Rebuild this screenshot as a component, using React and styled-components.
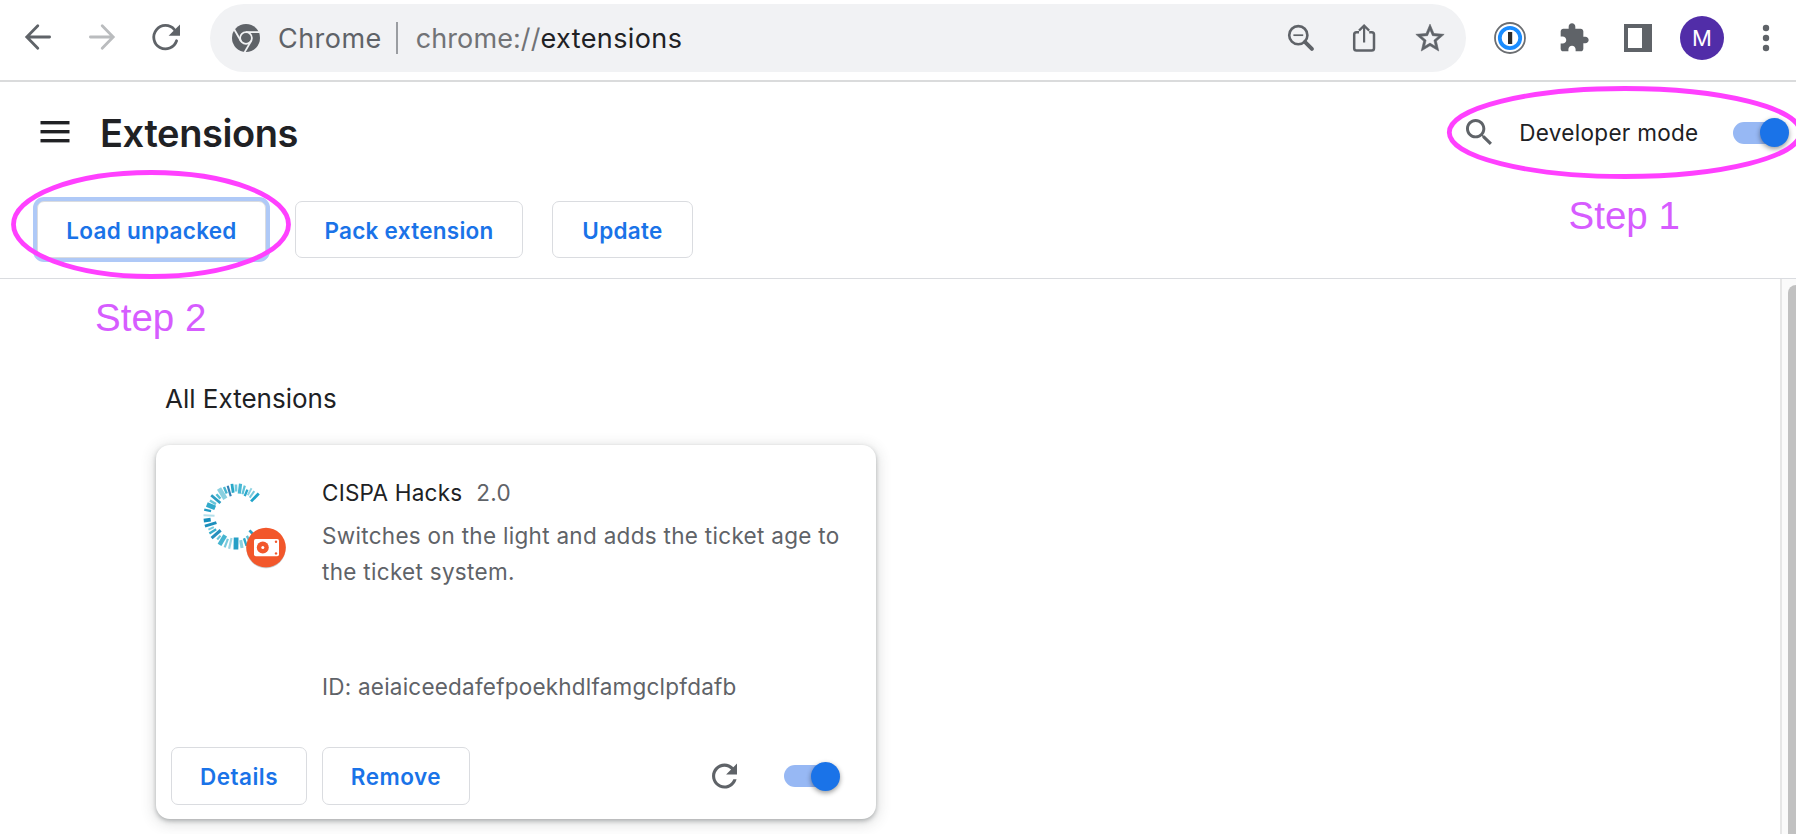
import React from "react";
import styled, { createGlobalStyle } from "styled-components";

const GlobalStyle = createGlobalStyle`
  *, *::before, *::after { box-sizing: border-box; }
  body {
    margin: 0;
    background: #fff;
    color: #202124;
    font-family: Inter, "Liberation Sans", sans-serif;
    font-size: 22.5px;
    letter-spacing: 0.3px;
  }
`;

const Window = styled.div`
  position: relative;
  display: flex;
  flex-direction: column;
  width: 1796px;
  height: 834px;
  overflow: hidden;
`;

const Icon = styled.svg`
  display: block;
  flex: none;
  overflow: visible;
`;

/* Browser toolbar */
const BrowserBar = styled.div`
  display: flex;
  align-items: center;
  flex: none;
  height: 82px;
  padding: 0 26px 6px 22px;
  border-bottom: 2px solid #dadbdc;
`;

const NavButtons = styled.div`
  display: flex;
  flex: none;
  gap: 32px;
  width: 188px;
`;

const Omnibox = styled.div`
  display: flex;
  align-items: center;
  flex: none;
  width: 1256px;
  height: 68px;
  margin-top: 2px;
  padding: 0 19px 0 22px;
  border-radius: 34px;
  background: #f1f2f4;
  font-size: 27px;
  letter-spacing: 0.45px;
  color: #5f6368;
`;

const SiteName = styled.span`
  margin-left: 18px;
`;

const Divider = styled.span`
  width: 2px;
  height: 32px;
  margin: 0 18px 0 14px;
  background: #9a9da1;
`;

const Url = styled.span`
  color: #717376;
  letter-spacing: 0.1px;
`;

const UrlHost = styled.span`
  color: #202124;
  letter-spacing: 0.4px;
`;

const OmniboxActions = styled.div`
  display: flex;
  align-items: center;
  gap: 32px;
  margin-left: auto;
`;

const BrowserActions = styled.div`
  display: flex;
  align-items: center;
  flex: none;
  gap: 32px;
  margin-left: 28px;
  padding-top: 2px;
`;

const Avatar = styled.span`
  display: grid;
  place-items: center;
  width: 44px;
  height: 44px;
  margin: 0 6px 0 -6px;
  border-radius: 50%;
  background: #512da8;
  color: #fff;
  font-size: 22px;
  letter-spacing: 0;
`;

/* Page header */
const Header = styled.header`
  display: flex;
  align-items: center;
  flex: none;
  height: 101px;
  padding: 0 7.5px 0 40px;
`;

const Title = styled.h1`
  margin: 0 auto 0 30px;
  font-size: 38px;
  font-weight: 560;
  letter-spacing: -0.4px;
`;

const ModeLabel = styled.span`
  margin: 0 34px 0 27px;
`;

const Track = styled.span`
  display: grid;
  align-items: center;
  flex: none;
  width: 56px;
  height: 29px;

  &::before {
    content: "";
    grid-area: 1 / 1;
    width: 50px;
    height: 22px;
    border-radius: 11px;
    background: #97b8f4;
  }
`;

const Knob = styled.span`
  grid-area: 1 / 1;
  justify-self: end;
  width: 29px;
  height: 29px;
  border-radius: 50%;
  background: #1a73e8;
  box-shadow: 0 2px 5px rgba(0, 0, 0, 0.4);
`;

const DevTools = styled.div`
  display: flex;
  gap: 29px;
  flex: none;
  height: 96px;
  padding: 18px 0 0 37px;
  border-bottom: 1px solid #dadce0;
`;

const Button = styled.button`
  flex: none;
  width: ${(p) => p.$width}px;
  height: ${(p) => (p.$tall ? 58 : 57)}px;
  padding: ${(p) => (p.$tall ? 0 : "2px")} 0 0;
  border: 1px solid #dadce0;
  border-radius: 7px;
  background: #fff;
  color: #1a73e8;
  font: 560 22.5px Inter, "Liberation Sans", sans-serif;
  letter-spacing: ${(p) => (p.$tall ? 0.5 : 0.28)}px;
  box-shadow: ${(p) => (p.$focused ? "0 0 0 4px #afc9f7" : "none")};
`;

/* Extension list */
const Content = styled.main`
  display: flex;
  flex: 1;
  min-height: 0;
`;

const List = styled.section`
  flex: 1;
  padding: 100px 0 0 156px;
`;

const ListTitle = styled.h2`
  margin: 0 0 26px 9px;
  font-size: 26px;
  line-height: 40px;
  font-weight: 400;
  letter-spacing: 0;
`;

const Scrollbar = styled.div`
  width: 16px;
  padding: 6px 0 0 6px;
  border-left: 2px solid #e6e6e6;
  background: #fafafa;
  overflow: hidden;
`;

const Thumb = styled.div`
  width: 16px;
  height: 600px;
  border-radius: 8px;
  background: #c1c1c1;
`;

const Card = styled.article`
  display: flex;
  flex-direction: column;
  width: 720px;
  height: 374px;
  border-radius: 14px;
  background: #fff;
  box-shadow: 0 2px 4px rgba(60, 64, 67, 0.34), 0 3px 13px 3px rgba(60, 64, 67, 0.15);
`;

const CardBody = styled.div`
  display: flex;
  flex: 1;
  padding: 29px 30px 0 47px;
`;

const Details = styled.div`
  display: flex;
  flex-direction: column;
  margin-left: 34px;
  padding-top: 1px;
  line-height: 36px;
  color: #5f6368;
  white-space: nowrap;
`;

const Name = styled.div`
  display: flex;
  gap: 14px;
  margin-bottom: 7px;
  letter-spacing: 0.22px;
`;

const NameText = styled.span`
  color: #202124;
`;

const Description = styled.p`
  width: 520px;
  margin: 0;
  white-space: normal;
`;

const ExtensionId = styled.div`
  margin-top: 79px;
  letter-spacing: 0.22px;
`;

const CardActions = styled.div`
  display: flex;
  align-items: center;
  gap: 15px;
  padding: 0 36px 14px 15px;
`;

const Reload = styled.span`
  margin-left: auto;
  margin-right: 32px;
`;

/* Hand-drawn annotations over the page */
const Annotations = styled.svg`
  position: absolute;
  inset: 0;
  pointer-events: none;
`;

const StepLabel = styled.span`
  position: absolute;
  left: ${(p) => p.$x}px;
  top: ${(p) => p.$y}px;
  color: #d65cff;
  font: 38.5px/44px "Liberation Sans", Arial, sans-serif;
  letter-spacing: 0;
`;

const GREY = "#5f6368";

function Toggle() {
  return (
    <Track role="switch" aria-checked="true">
      <Knob />
    </Track>
  );
}

function ArrowIcon({ color, forward }) {
  return (
    <Icon width="32" height="32" viewBox="0 0 32 32" fill="none" stroke={color} strokeWidth="2.8" strokeLinecap="round">
      <path
        transform={forward ? "translate(32 0) scale(-1 1)" : undefined}
        d="M27.6 16H5.4M15.8 4.8L4.8 16l11 11.2"
      />
    </Icon>
  );
}

function ToolbarReloadIcon() {
  return (
    <Icon width="32" height="32" viewBox="0 0 32 32">
      <path d="M26.6 19.8A11.7 11.7 0 1 1 24.4 8.6" fill="none" stroke={GREY} strokeWidth="2.8" strokeLinecap="round" />
      <path d="M30 3.5V14.7H18.6Z" fill={GREY} />
    </Icon>
  );
}

function ChromeIcon() {
  return (
    <Icon width="28" height="28" viewBox="0 0 28 28">
      <circle cx="14" cy="14" r="14" fill={GREY} />
      <g stroke="#f1f2f4" strokeWidth="1.8" fill="none">
        <circle cx="14" cy="14" r="5.9" />
        <path d="M14 8.1H27.5" />
        <path d="M14 8.1H27.5" transform="rotate(120 14 14)" />
        <path d="M14 8.1H27.5" transform="rotate(240 14 14)" />
      </g>
    </Icon>
  );
}

function ZoomOutIcon() {
  return (
    <Icon width="28" height="32" viewBox="0 0 28 32" fill="none" stroke={GREY}>
      <circle cx="11.3" cy="13.2" r="9.1" strokeWidth="2.6" />
      <path d="M6.4 13.2h9.8" strokeWidth="1.7" />
      <path d="M17.9 19.8l7 7" strokeWidth="4" strokeLinecap="round" />
    </Icon>
  );
}

function ShareIcon() {
  return (
    <Icon width="34" height="32" viewBox="-1 0 34 32" fill="none" stroke={GREY} strokeWidth="2.5">
      <path d="M11 10.2H8.5a2.3 2.3 0 0 0-2.3 2.3v13.8a2.3 2.3 0 0 0 2.3 2.3h15.2a2.3 2.3 0 0 0 2.3-2.3V12.5a2.3 2.3 0 0 0-2.3-2.3H21.2" />
      <path d="M16.1 20.5V4M11 8.6l5.100-5 5.100 5" strokeWidth="2.2" />
    </Icon>
  );
}

function StarIcon() {
  return (
    <Icon width="34" height="34" viewBox="0 -0.2 24 24" fill={GREY} stroke={GREY} strokeWidth="0.400">
      <path d="M22 9.240l-7.190-.62L12 2 9.190 8.630 2 9.240l5.460 4.730L5.820 21 12 17.270 18.180 21l-1.630-7.030L22 9.240zM12 15.400l-3.760 2.270 1-4.280-3.320-2.880 4.380-.38L12 6.100l1.710 4.040 4.380.38-3.320 2.880 1 4.280L12 15.400z" />
    </Icon>
  );
}

function PasswordIcon() {
  return (
    <Icon width="32" height="32" viewBox="0 0 32 32">
      <circle cx="16" cy="16" r="15" fill="#fff" stroke="#6b6e72" strokeWidth="1.800" />
      <circle cx="16" cy="16" r="10.200" fill="#fff" stroke="#1a8cff" strokeWidth="3.800" />
      <rect x="14" y="10" width="4.200" height="12" fill="#2b2b2b" />
    </Icon>
  );
}

function PuzzleIcon() {
  return (
    <Icon width="32" height="32" viewBox="0 0 24 24" fill={GREY}>
      <path d="M20.500 11H19V7c0-1.100-.9-2-2-2h-4V3.500C13 2.120 11.880 1 10.500 1S8 2.120 8 3.500V5H4c-1.100 0-1.990.9-1.990 2v3.800H3.500c1.490 0 2.700 1.210 2.700 2.700s-1.210 2.700-2.700 2.700H2V20c0 1.100.9 2 2 2h3.800v-1.500c0-1.490 1.210-2.700 2.700-2.700 1.490 0 2.700 1.210 2.700 2.700V22H17c1.100 0 2-.9 2-2v-4h1.500c1.380 0 2.500-1.120 2.500-2.500S21.880 11 20.500 11z" />
    </Icon>
  );
}

function SidePanelIcon() {
  return (
    <Icon width="32" height="32" viewBox="0 0 32 32">
      <path fillRule="evenodd" fill={GREY} d="M2 2H30v28H2zM6 6v20h14V6z" />
    </Icon>
  );
}

function MoreIcon() {
  return (
    <Icon width="8" height="32" viewBox="0 0 8 32" fill={GREY}>
      <circle cx="4" cy="6" r="3.200" />
      <circle cx="4" cy="16" r="3.200" />
      <circle cx="4" cy="26" r="3.200" />
    </Icon>
  );
}

function MenuIcon() {
  return (
    <Icon width="30" height="25" viewBox="0 0 30 25" fill="#202124">
      <rect x="0.500" y="1" width="29" height="3.400" />
      <rect x="0.500" y="10" width="29" height="3.400" />
      <rect x="0.500" y="19" width="29" height="3.400" />
    </Icon>
  );
}

function SearchIcon() {
  return (
    <Icon width="26" height="27" viewBox="3 3.300 17.500 17.500" fill={GREY}>
      <path d="M15.500 14h-.79l-.28-.27C15.410 12.590 16 11.110 16 9.500 16 5.910 13.090 3 9.500 3S3 5.910 3 9.500 5.910 16 9.500 16c1.610 0 3.090-.59 4.230-1.570l.27.28v.79l5 4.990L20.490 19l-4.990-5zm-6 0C7.010 14 5 11.990 5 9.500S7.010 5 9.500 5 14 7.010 14 9.500 11.990 14 9.500 14z" />
    </Icon>
  );
}

function ReloadIcon() {
  return (
    <Icon width="25" height="25" viewBox="4 4.300 16 16" fill={GREY}>
      <path d="M17.650 6.350C16.200 4.900 14.210 4 12 4c-4.420 0-7.990 3.580-7.990 8s3.570 8 7.990 8c3.730 0 6.840-2.550 7.730-6h-2.080c-.82 2.330-3.040 4-5.650 4-3.310 0-6-2.690-6-6s2.690-6 6-6c1.660 0 3.140.69 4.220 1.780L13 11h7V4l-2.350 2.350z" />
    </Icon>
  );
}

// [angle in degrees, inner radius, outer radius, stroke width, colour]
const TICKS = [
  [-46, 21, 32, 2.8, "#1fa3c9"], [-55, 23, 31, 2, "#79c9dd"], [-62, 24, 32, 1.9, "#8fd3e3"],
  [-68, 22, 29, 2.4, "#2da9cc"], [-75, 23, 32, 2.2, "#5fc2d9"], [-83, 23, 33, 3.2, "#48b8d4"],
  [-91, 25, 32, 2.6, "#73cade"], [-98, 24, 33, 2.8, "#28a8c8"], [-106, 21, 32, 2.2, "#327fb5"],
  [-113, 25, 32, 2.4, "#43b5cf"], [-122, 21, 33, 4.8, "#8bd0e0"], [-132, 24, 30, 2.4, "#51bdd3"],
  [-140, 21, 33, 2.8, "#2c9cc2"], [-149, 24, 31, 2.5, "#68c6da"], [-158, 23, 32, 4.8, "#32aacb"],
  [-168, 26, 33, 2.4, "#239bc4"], [-178, 22, 33, 2, "#b5dfea"], [173, 26, 33, 3.8, "#148ebc"],
  [163, 21, 33, 3, "#1c8fbd"], [155, 25, 31, 2, "#75c9dc"], [148, 24, 32, 2.4, "#37aecb"],
  [139, 21, 33, 3.1, "#258fbd"], [130, 25, 30, 2.2, "#69c4d9"], [121, 22, 33, 4.4, "#46b5d0"],
  [111, 24, 33, 2.2, "#78cadd"], [103, 22, 33, 2.2, "#9bd6e3"], [91, 21, 33, 4.8, "#259fc6"],
  [80, 24, 32, 3.1, "#8bd0df"], [71, 23, 31, 2.4, "#2da9cb"], [62, 22, 31, 2.4, "#5fc0d6"],
  [47, 19, 31, 2.8, "#2d9fc4"],
];

function ExtensionLogo() {
  return (
    <Icon width="85" height="90" viewBox="0 0 85 90">
      {TICKS.map(([angle, inner, outer, width, color]) => (
        <line
          key={angle}
          x1={33.5 + inner}
          x2={33.5 + outer}
          y1="42.500"
          y2="42.500"
          stroke={color}
          strokeWidth={width}
          transform={`rotate(${angle} 33.500 42.500)`}
        />
      ))}
      <circle cx="63" cy="75" r="19.500" fill="#000" opacity="0.120" />
      <circle cx="63" cy="74.300" r="19.600" fill="#000" opacity="0.140" />
      <circle cx="63" cy="73.500" r="19.800" fill="#f2572b" />
      <rect x="51" y="65" width="25" height="17.200" rx="1.800" fill="#fff" />
      <circle cx="59.800" cy="73.500" r="6" fill="#f2572b" />
      <circle cx="59.800" cy="73.500" r="1.500" fill="#fff" />
      <circle cx="73" cy="67.800" r="1.200" fill="#f2572b" />
      <circle cx="73" cy="79.400" r="1.200" fill="#f2572b" />
    </Icon>
  );
}

export default function App() {
  return (
    <Window>
      <GlobalStyle />
      <BrowserBar>
        <NavButtons>
          <ArrowIcon color={GREY} />
          <ArrowIcon color="#babcbe" forward />
          <ToolbarReloadIcon />
        </NavButtons>
        <Omnibox>
          <ChromeIcon />
          <SiteName>Chrome</SiteName>
          <Divider />
          <Url>chrome://</Url>
          <UrlHost>extensions</UrlHost>
          <OmniboxActions>
            <ZoomOutIcon />
            <ShareIcon />
            <StarIcon />
          </OmniboxActions>
        </Omnibox>
        <BrowserActions>
          <PasswordIcon />
          <PuzzleIcon />
          <SidePanelIcon />
          <Avatar>M</Avatar>
          <MoreIcon />
        </BrowserActions>
      </BrowserBar>

      <Header>
        <MenuIcon />
        <Title>Extensions</Title>
        <SearchIcon />
        <ModeLabel>Developer mode</ModeLabel>
        <Toggle />
      </Header>
      <DevTools>
        <Button $width={229} $focused>Load unpacked</Button>
        <Button $width={228}>Pack extension</Button>
        <Button $width={141}>Update</Button>
      </DevTools>

      <Content>
        <List>
          <ListTitle>All Extensions</ListTitle>
          <Card>
            <CardBody>
              <ExtensionLogo />
              <Details>
                <Name>
                  <NameText>CISPA Hacks</NameText>
                  <span>2.0</span>
                </Name>
                <Description>Switches on the light and adds the ticket age to the ticket system.</Description>
                <ExtensionId>ID: aeiaiceedafefpoekhdlfamgclpfdafb</ExtensionId>
              </Details>
            </CardBody>
            <CardActions>
              <Button $width={136} $tall>Details</Button>
              <Button $width={148} $tall>Remove</Button>
              <Reload><ReloadIcon /></Reload>
              <Toggle />
            </CardActions>
          </Card>
        </List>
        <Scrollbar>
          <Thumb />
        </Scrollbar>
      </Content>

      <Annotations width="1796" height="834" fill="none" stroke="#ff40ff" strokeWidth="4.800">
        <ellipse cx="1624.800" cy="132.500" rx="175.500" ry="44" />
        <ellipse cx="151" cy="224.500" rx="137.500" ry="52" />
      </Annotations>
      <StepLabel $x={1568.5} $y={194}>Step 1</StepLabel>
      <StepLabel $x={95} $y={296}>Step 2</StepLabel>
    </Window>
  );
}
